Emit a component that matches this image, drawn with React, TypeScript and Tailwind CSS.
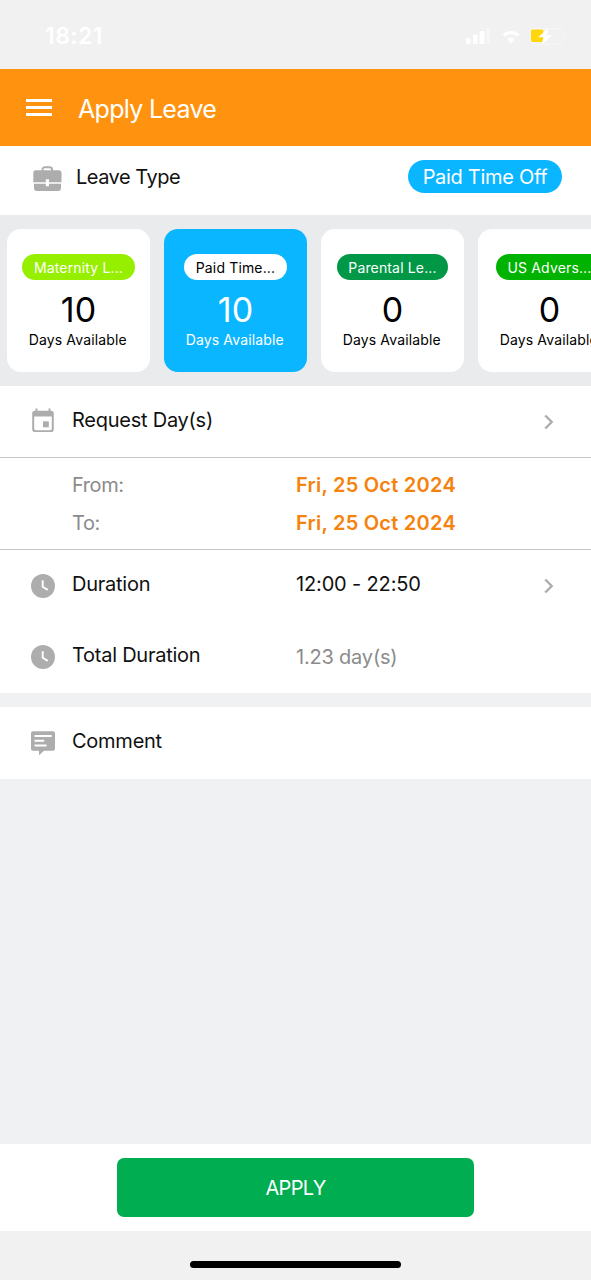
import type { ReactNode } from "react";

const leaves = [
  { name: "Maternity L...", days: 10, pill: "bg-[#97ef00] text-white w-[113px]" },
  { name: "Paid Time...", days: 10, pill: "bg-white text-black w-[103px]", active: true },
  { name: "Parental Le...", days: 0, pill: "bg-[#009846] text-white w-[111px]" },
  { name: "US Advers...", days: 0, pill: "bg-[#00b300] text-white w-[107px]" },
];

const BriefcaseIcon = () => (
  <svg width="29" height="25" viewBox="0 0 29 25" fill="#adadad">
    <path d="M9.500 5V3.600A2.300 2.300 0 0 1 11.800 1.300h4.900A2.300 2.300 0 0 1 19 3.600V5" fill="none" stroke="#adadad" strokeWidth="1.900" />
    <path d="M3 4.300h22.800a2.700 2.700 0 0 1 2.700 2.700v9.300H16V13.300h-3.200v3H.3V7A2.700 2.700 0 0 1 3 4.300z" />
    <path d="M1 17.800h11.800v2.500H16v-2.500h12v4.700a2.400 2.400 0 0 1-2.400 2.400H3.400A2.400 2.400 0 0 1 1 22.500z" />
  </svg>
);

const CalendarIcon = () => (
  <svg width="22" height="25" viewBox="0 0 22 25" fill="#adadad">
    <path
      fillRule="evenodd"
      d="M3.500.5h2v2.200h11V.5h2v2.200h.5a2.800 2.800 0 0 1 2.800 2.800v15.800a2.800 2.800 0 0 1-2.800 2.800H3a2.800 2.800 0 0 1-2.800-2.800V5.500A2.800 2.800 0 0 1 3 2.700h.5zM2.200 8.500v12c0 1 .7 1.700 1.700 1.700h14.200c1 0 1.700-.7 1.700-1.700v-12z"
    />
    <path d="M11 13.300h5.800v6H11z" />
  </svg>
);

const ClockIcon = () => (
  <svg width="24" height="24" viewBox="0 0 24 24">
    <circle cx="12" cy="12" r="12" fill="#adadad" />
    <path d="M11.700 6.200v6.500l5 3.200" fill="none" stroke="#fff" strokeWidth="1.900" />
  </svg>
);

const CommentIcon = () => (
  <svg width="24" height="25" viewBox="0 0 24 25">
    <path d="M2 .3h20a2 2 0 0 1 2 2v15.400a2 2 0 0 1-2 2h-9L8 24.300v-4.600H2a2 2 0 0 1-2-2V2.300a2 2 0 0 1 2-2z" fill="#adadad" />
    <path d="M3.500 4.900h17.200M3.500 9.800h9.700M3.500 14.600h12" stroke="#fff" strokeWidth="2" />
  </svg>
);

const Chevron = () => (
  <svg width="10" height="16" viewBox="0 0 10 16" fill="none" stroke="#adadad" strokeWidth="2.400">
    <path d="M1.200 1.500 7.700 8l-6.500 6.500" />
  </svg>
);

const StatusBar = () => (
  <div className="h-[69px] shrink-0 bg-[#f1f1f1] flex justify-between items-start pl-[45px] pr-[24px] text-white">
    <span className="mt-[22px] text-[23px] leading-[28px] font-semibold tracking-[0.4px]">18:21</span>
    <div className="flex items-start pt-[28px]">
      <svg width="24" height="16" viewBox="0 0 24 16" fill="#fff">
        <rect x="0" y="10" width="4.500" height="6" rx="1" />
        <rect x="7" y="6.500" width="4.500" height="9.500" rx="1" />
        <rect x="13.500" y="3" width="5" height="13" rx="1" />
        <rect x="20" y="0" width="4" height="16" rx="1" opacity=".35" />
      </svg>
      <svg className="ml-[12px] mt-[2px]" width="18" height="14" viewBox="0 0 18 14" fill="none" stroke="#fff">
        <path d="M1.500 5.500C5.500 1.500 12.500 1.500 16.500 5.500" strokeWidth="3" />
        <path d="M5 8.700c2.300-2 5.700-2 8 0" strokeWidth="1.500" opacity=".4" />
        <path d="M5.500 9.500c2-1.700 5-1.700 7 0L9 13.500z" fill="#fff" stroke="none" />
      </svg>
      <svg className="ml-[10px]" width="37" height="18" viewBox="0 0 37 18">
        <rect x=".7" y=".7" width="32" height="15.500" rx="4.500" fill="none" stroke="#f6f6f6" strokeWidth="1.200" />
        <path d="M34.800 6v5.500c1.200-.4 1.900-1.500 1.900-2.700S36 6.400 34.800 6z" fill="#f6f6f6" />
        <rect x="1" y="1.500" width="12.500" height="12.500" rx="2" fill="#ffd60a" />
        <path d="m18.500 0-10.500 9.300h5.700l-2.400 7.700L22 7.200h-5.400z" fill="#fff" />
      </svg>
    </div>
  </div>
);

const Row = ({ icon, label, children, className }: { icon: ReactNode; label: string; children?: ReactNode; className: string }) => (
  <div className={`flex items-start shrink-0 bg-white pl-[31px] pr-[37px] ${className}`}>
    <div className="w-[41px]">{icon}</div>
    <div className="w-[224px] tracking-[-0.25px]">{label}</div>
    {children}
  </div>
);

export default function App() {
  return (
    <div className="w-full h-[1280px] overflow-hidden flex flex-col bg-[#f0f1f3] font-['Inter',sans-serif] text-[20px] leading-[24px] text-[#111]">
      <StatusBar />

      <header className="h-[77px] shrink-0 bg-[#ff930f] flex items-center pl-[26px] text-white">
        <div className="flex flex-col gap-[4px]">
          <div className="w-[26px] h-[3px] bg-white" />
          <div className="w-[26px] h-[3px] bg-white" />
          <div className="w-[26px] h-[3px] bg-white" />
        </div>
        <h1 className="ml-[26px] mt-[2px] text-[25px] leading-[30px] tracking-[-0.7px]">Apply Leave</h1>
      </header>

      <div className="h-[69px] shrink-0 bg-white flex items-start pl-[33px] pr-[29px]">
        <div className="w-[43px] pt-[20px]">
          <BriefcaseIcon />
        </div>
        <span className="pt-[19px] tracking-[-0.5px]">Leave Type</span>
        <span className="ml-auto mt-[14px] w-[154px] h-[33px] rounded-full bg-[#0ab6ff] text-white text-center leading-[34px] tracking-[-0.3px]">
          Paid Time Off
        </span>
      </div>

      <div className="h-[171px] shrink-0 bg-[#e9ebed] flex gap-[14px] pl-[7px] pt-[14px]">
        {leaves.map((leave) => (
          <div
            key={leave.name}
            className={`w-[143px] h-[143px] shrink-0 rounded-[14px] flex flex-col items-center pt-[25px] ${
              leave.active ? "bg-[#0ab6ff] text-white" : "bg-white text-black"
            }`}
          >
            <span
              className={`h-[26px] rounded-full text-center text-[14px] leading-[27px] tracking-[0.15px] whitespace-nowrap ${leave.pill}`}
            >
              {leave.name}
            </span>
            <span className="mt-[12px] text-[34px] leading-[36px]">{leave.days}</span>
            <span className="mt-[3px] mr-[1.5px] text-[14px] leading-[18px] tracking-[0.15px] whitespace-nowrap">
              Days Available
            </span>
          </div>
        ))}
      </div>

      <Row icon={<CalendarIcon />} label="Request Day(s)" className="h-[71px] pt-[22px] [&>:first-child]:pl-px">
        <div className="ml-auto pt-[6px]">
          <Chevron />
        </div>
      </Row>

      <div className="h-[93px] shrink-0 bg-white border-y border-[#c4c5c8] pl-[72px] pt-[15px] flex flex-col gap-[14px] text-[#8b8b8b]">
        <div className="flex">
          <span className="w-[224px] tracking-[-0.4px]">From:</span>
          <span className="font-semibold text-[#f5820c] tracking-[0.25px]">Fri, 25 Oct 2024</span>
        </div>
        <div className="flex">
          <span className="w-[224px] tracking-[-0.4px]">To:</span>
          <span className="font-semibold text-[#f5820c] tracking-[0.25px]">Fri, 25 Oct 2024</span>
        </div>
      </div>

      <Row icon={<ClockIcon />} label="Duration" className="h-[72px] pt-[22px] [&>:first-child]:pt-[2px]">
        <span className="tracking-[-0.15px]">12:00 - 22:50</span>
        <div className="ml-auto pt-[6px]">
          <Chevron />
        </div>
      </Row>
      <Row icon={<ClockIcon />} label="Total Duration" className="h-[71px] pt-[21px] [&>:first-child]:pt-[2px]">
        <span className="pt-[2px] text-[#8b8b8b] tracking-[-0.2px]">1.23 day(s)</span>
      </Row>

      <Row icon={<CommentIcon />} label="Comment" className="mt-[14px] h-[72px] pt-[22px] [&>:first-child]:pt-[2px]" />

      <div className="mt-auto h-[87px] shrink-0 bg-white flex justify-center pt-[14px]">
        <button className="w-[357px] h-[59px] rounded-[7px] bg-[#00ad50] text-white tracking-[-0.7px]">APPLY</button>
      </div>
      <div className="h-[49px] shrink-0 bg-[#f1f1f1] flex justify-center pt-[30px]">
        <div className="w-[211px] h-[7px] rounded-full bg-black" />
      </div>
    </div>
  );
}
